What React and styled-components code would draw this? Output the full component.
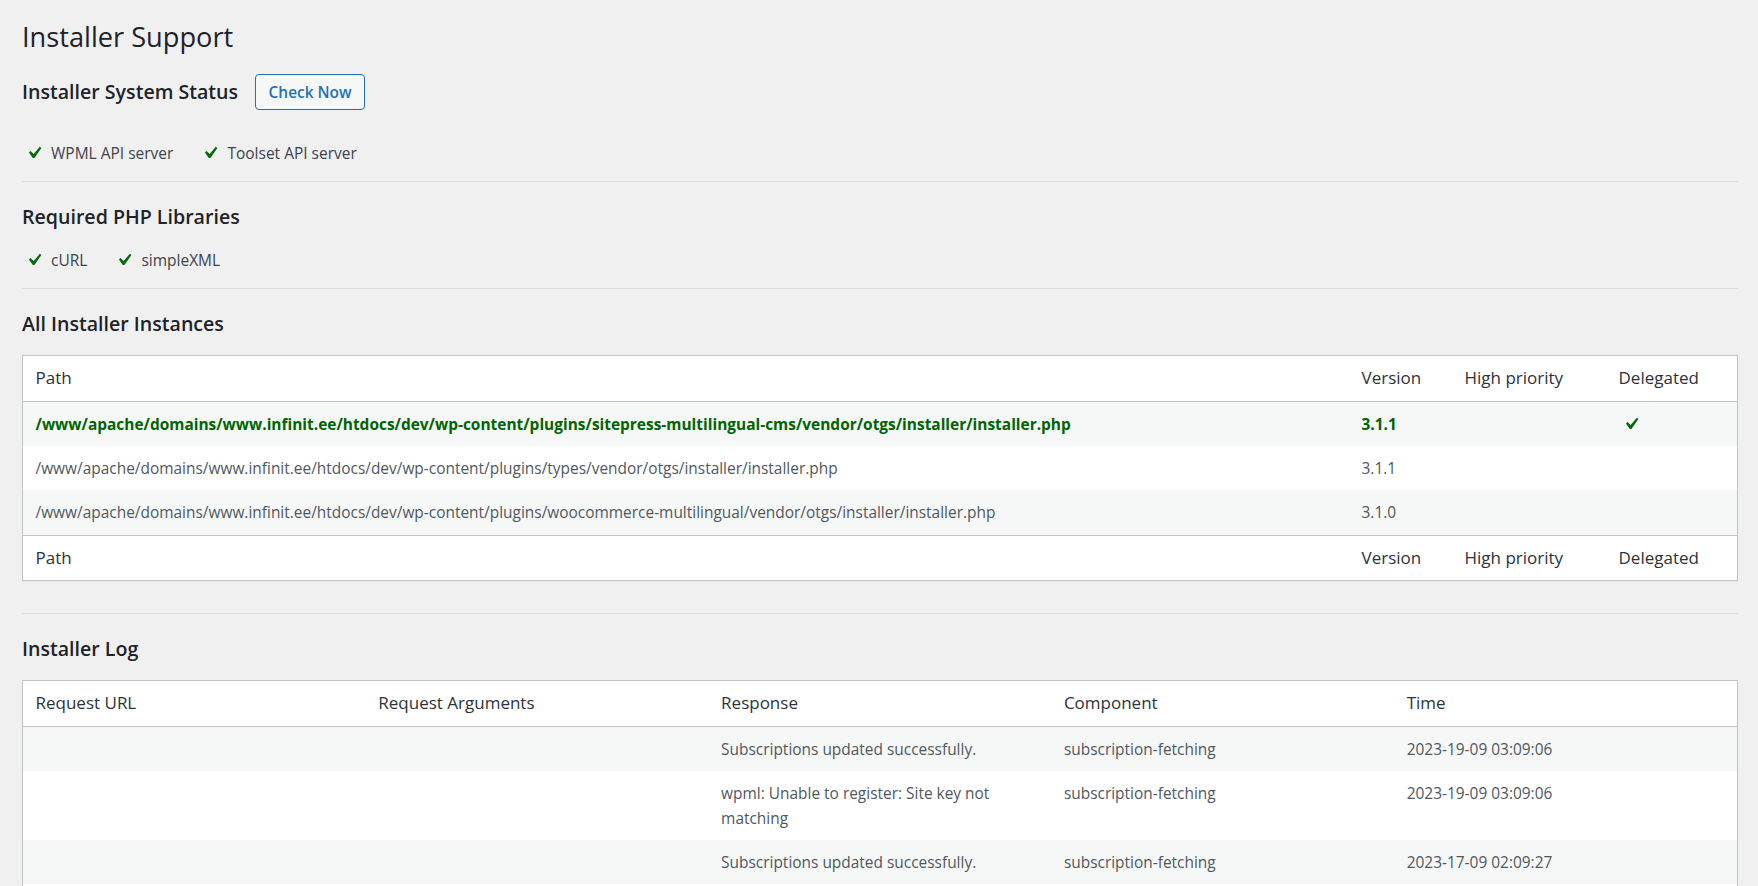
import React from 'react';
import styled, { createGlobalStyle } from 'styled-components';

const GlobalStyle = createGlobalStyle`
  *, *::before, *::after {
    box-sizing: border-box;
  }

  html, body {
    margin: 0;
    overflow: hidden;
  }

  body {
    background-color: #f0f0f1;
    color: #3c434a;
    font-family: "Open Sans", "Noto Sans", sans-serif;
    font-size: 15.5px;
    line-height: 24px;
  }
`;

const Wrap = styled.div`
  padding: 18px 20px 0 22px;
`;

const PageTitle = styled.h1`
  margin: 0;
  font-size: 27.2px;
  font-weight: 400;
  line-height: 37px;
  color: #1d2327;
`;

const HeaderRow = styled.div`
  display: flex;
  align-items: center;
  gap: 17px;
  margin-top: 19px;
  height: 36px;
`;

const SectionTitle = styled.h2`
  margin: ${(p) => (p.$inline ? '0' : '21px 0 17px')};
  font-size: 19.6px;
  font-weight: 600;
  line-height: 28px;
  color: #1d2327;
`;

const Button = styled.button`
  height: 36px;
  padding: 0 12.5px;
  background-color: #f6f7f7;
  color: #2271b1;
  border: 1px solid #2271b1;
  border-radius: 4px;
  font-family: inherit;
  font-size: 15.4px;
  font-weight: 600;
  cursor: pointer;
`;

const StatusList = styled.div`
  display: flex;
  gap: 25px;
  margin: ${(p) => p.$top}px 0 16px;
  line-height: 24px;
`;

const StatusItem = styled.span`
  display: flex;
  align-items: center;
  gap: 5px;
`;

const Divider = styled.hr`
  margin: 0;
  border: 0;
  border-top: 1px solid #dcdcde;
`;

const Table = styled.table`
  width: 100%;
  table-layout: fixed;
  border-collapse: separate;
  border-spacing: 0;
  background-color: #fff;
  border: 1px solid #c3c4c7;
  box-shadow: 0 1px 1px rgba(0, 0, 0, 0.04);
  margin-bottom: ${(p) => p.$bottom || 0}px;
`;

const HeadCell = styled.th`
  width: ${(p) => p.$width || 'auto'};
  padding: 10px 12.5px;
  text-align: left;
  font-size: 17px;
  font-weight: 400;
  line-height: 24.5px;
  color: #2c3338;
  border-bottom: ${(p) => (p.$foot ? '0' : '1px solid #c3c4c7')};
  border-top: ${(p) => (p.$foot ? '1px solid #c3c4c7' : '0')};
`;

const Row = styled.tr`
  background-color: ${(p) => (p.$striped ? '#f6f7f7' : '#fff')};
`;

const Cell = styled.td`
  padding: 10px 12.5px;
  vertical-align: top;
  font-size: 15.45px;
  line-height: 24.4px;
  color: ${(p) => (p.$active ? '#006400' : '#50575e')};
  font-weight: ${(p) => (p.$active ? 700 : 400)};
`;

const IconCell = styled.span`
  display: flex;
  height: 24.4px;
  align-items: center;
`;

const CheckIcon = ({ size = 24 }) => (
  <svg width={size} height={size} viewBox="0 0 20 20" aria-hidden="true">
    <path
      fill="#066a0a"
      d="M14.83 4.89l1.34.94-5.81 8.38H9.02L5.78 9.67l1.34-1.25 2.57 2.4z"
    />
  </svg>
);

const instances = [
  {
    path: '/www/apache/domains/www.infinit.ee/htdocs/dev/wp-content/plugins/sitepress-multilingual-cms/vendor/otgs/installer/installer.php',
    version: '3.1.1',
    active: true,
    delegated: true,
  },
  {
    path: '/www/apache/domains/www.infinit.ee/htdocs/dev/wp-content/plugins/types/vendor/otgs/installer/installer.php',
    version: '3.1.1',
  },
  {
    path: '/www/apache/domains/www.infinit.ee/htdocs/dev/wp-content/plugins/woocommerce-multilingual/vendor/otgs/installer/installer.php',
    version: '3.1.0',
  },
];

const logs = [
  { response: 'Subscriptions updated successfully.', component: 'subscription-fetching', time: '2023-19-09 03:09:06' },
  { response: 'wpml: Unable to register: Site key not matching', component: 'subscription-fetching', time: '2023-19-09 03:09:06' },
  { response: 'Subscriptions updated successfully.', component: 'subscription-fetching', time: '2023-17-09 02:09:27' },
];

const InstanceHead = ({ foot }) => (
  <tr>
    <HeadCell $foot={foot}>Path</HeadCell>
    <HeadCell $foot={foot} $width="103px">Version</HeadCell>
    <HeadCell $foot={foot} $width="154px">High priority</HeadCell>
    <HeadCell $foot={foot} $width="131px">Delegated</HeadCell>
  </tr>
);

const App = () => {
  return (
    <>
      <GlobalStyle />
      <Wrap>
        <PageTitle>Installer Support</PageTitle>

        <HeaderRow>
          <SectionTitle $inline>Installer System Status</SectionTitle>
          <Button>Check Now</Button>
        </HeaderRow>
        <StatusList $top={31}>
          <StatusItem><CheckIcon />WPML API server</StatusItem>
          <StatusItem><CheckIcon />Toolset API server</StatusItem>
        </StatusList>
        <Divider />

        <SectionTitle>Required PHP Libraries</SectionTitle>
        <StatusList $top={0}>
          <StatusItem><CheckIcon />cURL</StatusItem>
          <StatusItem><CheckIcon />simpleXML</StatusItem>
        </StatusList>
        <Divider />

        <SectionTitle>All Installer Instances</SectionTitle>
        <Table $bottom={32}>
          <thead>
            <InstanceHead />
          </thead>
          <tbody>
            {instances.map((item, i) => (
              <Row key={item.path} $striped={i % 2 === 0}>
                <Cell $active={item.active}>{item.path}</Cell>
                <Cell $active={item.active}>{item.version}</Cell>
                <Cell />
                <Cell>
                  {item.delegated && (
                    <IconCell><CheckIcon /></IconCell>
                  )}
                </Cell>
              </Row>
            ))}
          </tbody>
          <tfoot>
            <InstanceHead foot />
          </tfoot>
        </Table>
        <Divider />

        <SectionTitle>Installer Log</SectionTitle>
        <Table>
          <thead>
            <tr>
              <HeadCell>Request URL</HeadCell>
              <HeadCell>Request Arguments</HeadCell>
              <HeadCell>Response</HeadCell>
              <HeadCell>Component</HeadCell>
              <HeadCell>Time</HeadCell>
            </tr>
          </thead>
          <tbody>
            {logs.map((log, i) => (
              <Row key={i} $striped={i % 2 === 0}>
                <Cell />
                <Cell />
                <Cell>{log.response}</Cell>
                <Cell>{log.component}</Cell>
                <Cell>{log.time}</Cell>
              </Row>
            ))}
            <Row>
              <Cell />
              <Cell />
              <Cell />
              <Cell />
              <Cell />
            </Row>
          </tbody>
        </Table>
      </Wrap>
    </>
  );
};

export default App;
